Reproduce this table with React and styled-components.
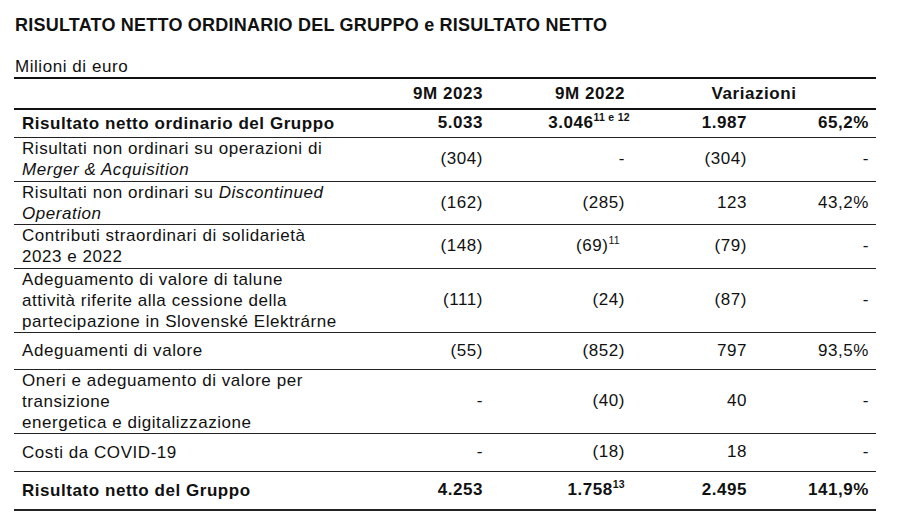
import React from "react";
import styled, { createGlobalStyle } from "styled-components";

const GlobalStyle = createGlobalStyle`
  html, body {
    margin: 0;
    padding: 0;
    background: #fff;
  }
  body {
    font-family: "Liberation Sans", Arial, sans-serif;
    color: #111;
  }
`;

// value cells: plain string, or [number, footnote, right padding]
const rows = [
  { label: "Risultato netto ordinario del Gruppo", bold: true, h: 28, v: ["5.033", ["3.046", "11 e 12", 2], "1.987", "65,2%"] },
  { label: <>Risultati non ordinari su operazioni di<br /><i>Merger &amp; Acquisition</i></>, h: 44, v: ["(304)", "-", "(304)", "-"] },
  { label: <>Risultati non ordinari su <i>Discontinued</i><br /><i>Operation</i></>, h: 43, v: ["(162)", "(285)", "123", "43,2%"] },
  { label: <>Contributi straordinari di solidarietà<br />2023 e 2022</>, h: 44, v: ["(148)", ["(69)", "11", 12], "(79)", "-"] },
  { label: <>Adeguamento di valore di talune<br />attività riferite alla cessione della<br />partecipazione in Slovenské Elektrárne</>, h: 64, v: ["(111)", "(24)", "(87)", "-"] },
  { label: "Adeguamenti di valore", h: 37, v: ["(55)", "(852)", "797", "93,5%"] },
  { label: <>Oneri e adeguamento di valore per<br />transizione<br />energetica e digitalizzazione</>, h: 63, v: ["-", "(40)", "40", "-"] },
  { label: "Costi da COVID-19", h: 38, v: ["-", "(18)", "18", "-"] },
  { label: "Risultato netto del Gruppo", bold: true, h: 39, last: true, v: ["4.253", ["1.758", "13", 7], "2.495", "141,9%"] },
];

export default function App() {
  return (
    <>
      <GlobalStyle />
      <Page>
        <Title>RISULTATO NETTO ORDINARIO DEL GRUPPO e RISULTATO NETTO</Title>
        <Unit>Milioni di euro</Unit>
        <Table>
          <colgroup>
            <col style={{ width: 376 }} />
            <col style={{ width: 100 }} />
            <col style={{ width: 142 }} />
            <col style={{ width: 122 }} />
            <col style={{ width: 122 }} />
          </colgroup>
          <thead>
            <HeadRow>
              <HeadCell />
              <HeadCell $align="right">9M 2023</HeadCell>
              <HeadCell $align="right">9M 2022</HeadCell>
              <HeadCell colSpan={2} $align="center">Variazioni</HeadCell>
            </HeadRow>
          </thead>
          <tbody>
            {rows.map((r, i) => (
              <Row key={i} $h={r.h} $last={r.last}>
                <Label $bold={r.bold}>{r.label}</Label>
                {r.v.map((val, j) =>
                  Array.isArray(val) ? (
                    <Value key={j} $bold={r.bold} $pr={val[2]}>
                      {val[0]}
                      <Sup>{val[1]}</Sup>
                    </Value>
                  ) : (
                    <Value key={j} $bold={r.bold}>
                      {val}
                    </Value>
                  )
                )}
              </Row>
            ))}
          </tbody>
        </Table>
      </Page>
    </>
  );
}

const Page = styled.div`
  width: 900px;
  height: 522px;
  padding: 15px 0 0 14px;
  box-sizing: border-box;
  overflow: hidden;
`;

const Title = styled.h1`
  margin: 0 0 0 1px;
  font-size: 18px;
  font-weight: 700;
  line-height: 21px;
  letter-spacing: 0.22px;
`;

const Unit = styled.div`
  margin: 22px 0 0 1px;
  font-size: 17px;
  letter-spacing: 0.55px;
  line-height: 18px;
  height: 19px;
`;

const Table = styled.table`
  width: 862px;
  border-collapse: collapse;
  table-layout: fixed;
  border-top: 2.5px solid #111;
  font-size: 17px;
  letter-spacing: 0.55px;
`;

const HeadRow = styled.tr`
  height: 31px;
  border-bottom: 2px solid #111;
`;

const HeadCell = styled.th`
  font-weight: 700;
  text-align: ${(p) => p.$align || "left"};
  padding: 0 ${(p) => (p.$align === "right" ? "7px" : "0")} 0 0;
  vertical-align: middle;
  line-height: 20px;
`;

const Row = styled.tr`
  height: ${(p) => p.$h}px;
  border-bottom: ${(p) => (p.$last ? "2px" : "1.5px")} solid #222;
`;

const Label = styled.td`
  padding: 0 0 0 8px;
  line-height: 21px;
  font-weight: ${(p) => (p.$bold ? 700 : 400)};
  vertical-align: middle;
  white-space: nowrap;
`;

const Value = styled.td`
  text-align: right;
  padding: 0 ${(p) => (p.$pr != null ? p.$pr : 7)}px 0 0;
  line-height: 20px;
  font-weight: ${(p) => (p.$bold ? 700 : 400)};
  vertical-align: middle;
  white-space: nowrap;
`;

const Sup = styled.sup`
  font-size: 10.5px;
  letter-spacing: 0.3px;
  line-height: 0;
  vertical-align: 0;
  position: relative;
  top: -7px;
`;
